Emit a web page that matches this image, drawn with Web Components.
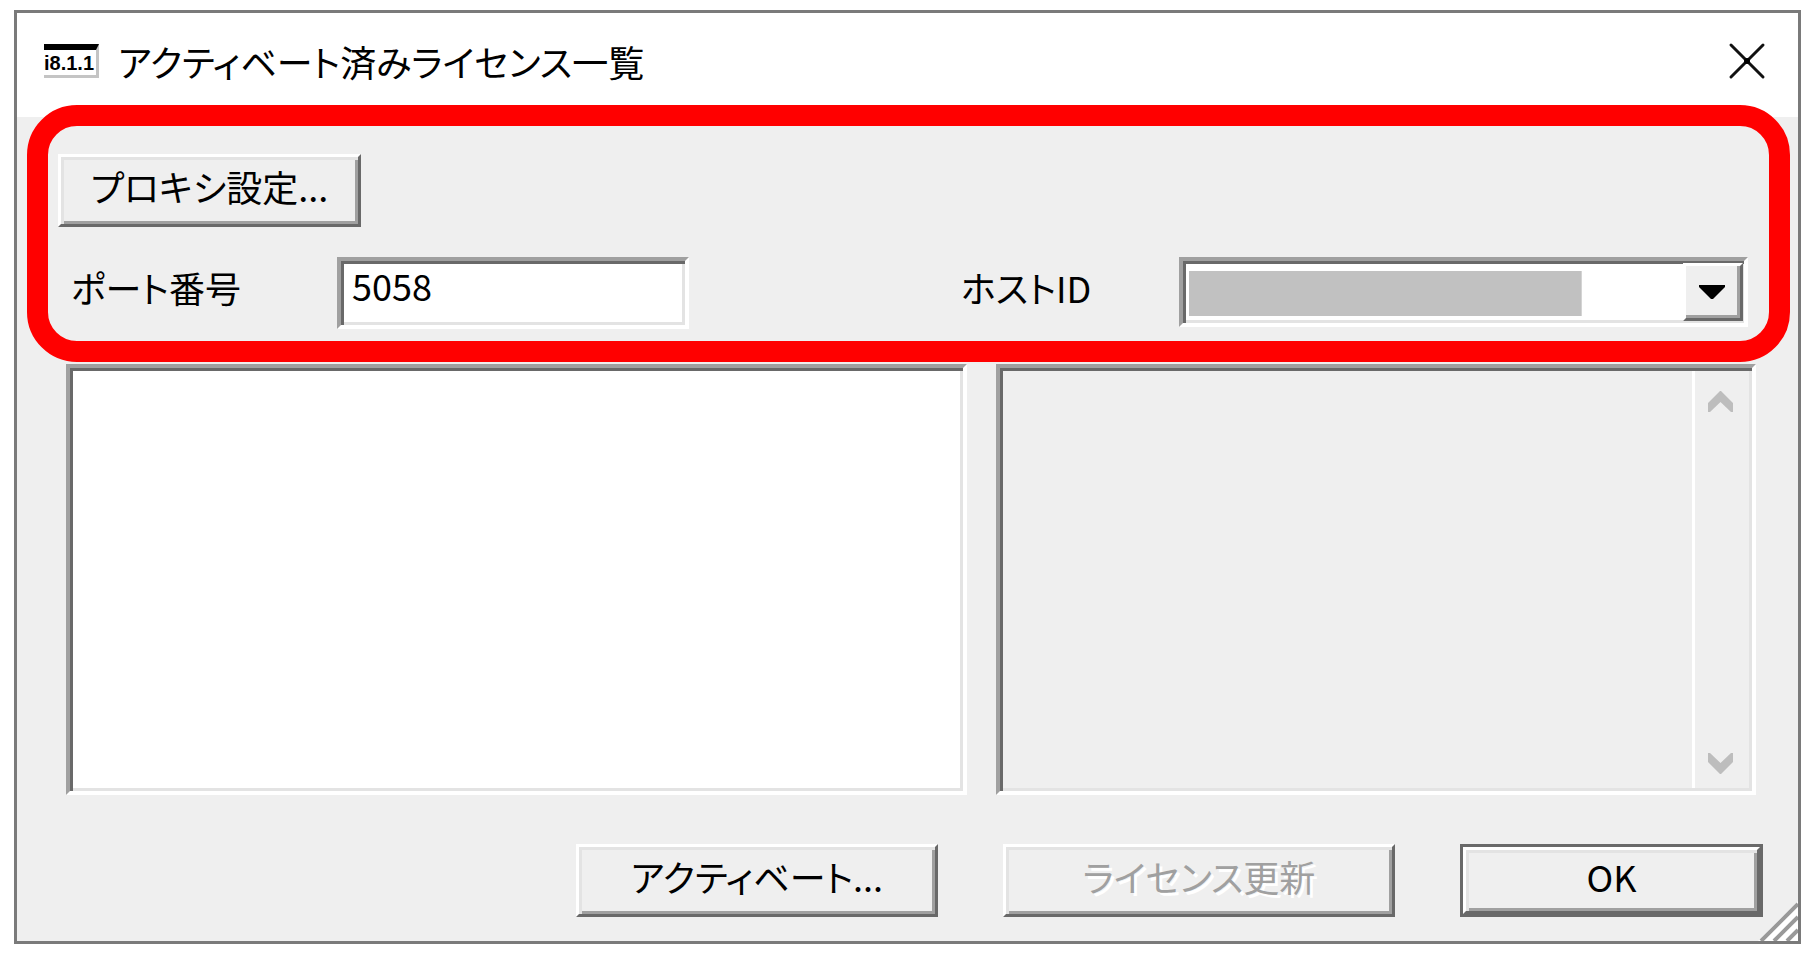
<!DOCTYPE html>
<html lang="ja">
<head>
<meta charset="utf-8">
<title>アクティベート済みライセンス一覧</title>
<style>
html, body { margin: 0; background: #fff; }
body {
  min-height: 100vh; display: flex; box-sizing: border-box; padding: 10px 14px 11px;
  font: 36px/40px "Noto Sans CJK JP", "Liberation Sans", sans-serif;
  font-feature-settings: "palt"; color: #000;
  --face: #efefef; --light: #fff; --soft: #e3e3e3; --mid: #a0a0a0; --dark: #696969;
}
</style>
</head>
<body>
<license-window></license-window>
<script>
class Base extends HTMLElement {
  constructor() {
    super();
    this.attachShadow({ mode: "open" }).innerHTML = this.constructor.markup;
  }
}

class TitleBar extends Base {
  static markup = `
<style>
:host { display: flex; align-items: center; height: 104px; background: #fff; padding: 0 32px 8px 27px; box-sizing: border-box; }
.icon { width: 55px; height: 34px; box-sizing: border-box; border: solid #c4c4c4; border-width: 0 3px 3px 0; border-top: 6px solid #000;
  font: bold 20px/26px "Liberation Sans", sans-serif; margin-right: 19px; white-space: nowrap; }
h1 { margin: 0; font: inherit; flex: 1; white-space: nowrap; }
button { border: 0; padding: 0; background: none; width: 38px; height: 38px; }
svg { display: block; }
</style>
<span class="icon">i8.1.1</span>
<h1><slot></slot></h1>
<button type="button" aria-label="閉じる"><svg width="38" height="38" viewBox="0 0 38 38"><path d="M3 3 35 35M35 3 3 35" stroke="#111" stroke-width="3" stroke-linecap="round"/><circle cx="19" cy="19" r="3"/></svg></button>`;
}
customElements.define("title-bar", TitleBar);

class PushButton extends Base {
  static markup = `
<style>
:host { display: block; height: 73px; }
:host([wide]) { width: 392px; }
:host([medium]) { width: 362px; }
:host([small]) { width: 303px; }
button { display: block; box-sizing: border-box; width: 100%; height: 100%; padding: 0 0 10px; margin: 0;
  font: inherit; font-feature-settings: inherit; color: #000; background: var(--face);
  border: 3px solid; border-color: var(--light) var(--dark) var(--dark) var(--light);
  box-shadow: inset 3px 3px var(--soft), inset -3px -3px var(--mid); white-space: nowrap; }
button:disabled { color: var(--mid); text-shadow: 3px 3px #fff; }
:host([default]) { box-sizing: border-box; border: 3px solid var(--dark); }
</style>
<button type="button"><slot></slot></button>`;
  connectedCallback() {
    this.shadowRoot.querySelector("button").disabled = this.hasAttribute("disabled");
  }
}
customElements.define("push-button", PushButton);

class ConnectionSettings extends Base {
  static markup = `
<style>
:host { display: block; position: relative; margin: 0 8px 0 10px; padding: 37px 42px 33px 31px; }
.mark { position: absolute; inset: -12px 0 0; border: 21px solid #f00; border-radius: 50px; pointer-events: none; }
.row { display: grid; grid-template-columns: 279fr 624fr 218fr 569fr; margin-top: 30px; height: 72px; }
label { align-self: center; white-space: nowrap; padding-bottom: 12px; }
.port { padding-left: 13px; }
input, select { display: block; box-sizing: border-box; margin: 0; font: inherit; border: 4px solid; border-radius: 0; outline: 0;
  border-color: var(--mid) var(--light) var(--light) var(--mid);
  box-shadow: inset 3px 3px var(--dark), inset -3px -3px var(--soft); }
input { width: 352px; height: 72px; padding: 0 11px 16px; background: #fff; }
.combo { display: grid; height: 70px; }
.combo > * { grid-area: 1 / 1; }
select { appearance: none; width: 100%; height: 70px;
  background: linear-gradient(#c1c1c1, #c1c1c1) 6px 10px / 70% 45px no-repeat #fff; }
.drop { justify-self: end; align-self: center; margin-right: 5px; width: 60px; height: 58px; box-sizing: border-box; pointer-events: none; padding-right: 3px;
  display: grid; place-items: center; background: var(--face);
  border: 3px solid; border-color: var(--light) var(--dark) var(--dark) var(--light);
  box-shadow: inset -3px -3px var(--mid); }
</style>
<push-button small>プロキシ設定...</push-button>
<div class="row">
  <label class="port" for="port">ポート番号</label>
  <input id="port" type="text" value="5058">
  <label for="host">ホストID</label>
  <div class="combo">
    <select id="host"></select>
    <span class="drop"><svg width="26" height="14" viewBox="0 0 26 14"><path d="M0 0h26v2L14 14h-2L0 2z"/></svg></span>
  </div>
</div>
<div class="mark"></div>`;
}
customElements.define("connection-settings", ConnectionSettings);

class LicensePanes extends Base {
  static markup = `
<style>
:host { display: grid; grid-template-columns: 901fr 760fr; gap: 29px; flex: 1; min-height: 200px; margin: 2px 42px 0 49px; }
select, .detail { box-sizing: border-box; margin: 0; border: 4px solid; border-radius: 0; padding: 3px; min-width: 0;
  border-color: var(--mid) var(--light) var(--light) var(--mid);
  box-shadow: inset 3px 3px var(--dark), inset -3px -3px var(--soft); }
select { appearance: none; width: 100%; height: 100%; background: #fff; }
.detail { display: flex; background: var(--face); }
textarea { flex: 1; min-width: 0; resize: none; border: 0; padding: 0; background: none; overflow: hidden; font: inherit; }
.bar { width: 57px; border-left: 3px solid #fff; display: flex; flex-direction: column; justify-content: space-between; align-items: center; padding: 20px 3px 14px 0; box-sizing: border-box; }
svg { display: block; }
</style>
<select size="2" aria-label="ライセンス一覧"></select>
<div class="detail">
  <textarea readonly aria-label="ライセンス詳細"></textarea>
  <div class="bar">
    <svg width="25" height="22" viewBox="0 0 25 22"><path d="M0 12 12 0h1l12 12v9h-2L12.500 11 2 21H0z" fill="#bdbdbd"/></svg>
    <svg width="25" height="22" viewBox="0 0 25 22"><path d="M0 10 12 22h1L25 10V1h-2L12.500 11 2 1H0z" fill="#bdbdbd"/></svg>
  </div>
</div>`;
}
customElements.define("license-panes", LicensePanes);

class LicenseWindow extends Base {
  static markup = `
<style>
:host { flex: 1; min-width: 0; display: flex; flex-direction: column; position: relative; box-sizing: border-box; border: 3px solid #7a7a7a; background: var(--face); }
footer { display: flex; justify-content: flex-end; gap: 65px; padding: 49px 35px 24px; }
.grip { position: absolute; right: 0; bottom: 0; display: block; }
</style>
<title-bar>アクティベート済みライセンス一覧</title-bar>
<connection-settings></connection-settings>
<license-panes></license-panes>
<footer>
  <push-button medium>アクティベート...</push-button>
  <push-button wide disabled>ライセンス更新</push-button>
  <push-button small default>OK</push-button>
</footer>
<svg class="grip" width="40" height="40" viewBox="0 0 40 40"><path d="M0 40 40 0v40z" fill="#fff"/><path d="M3 40 40 3M16 40 40 16M29 40 40 29" stroke="#999" stroke-width="4"/></svg>`;
}
customElements.define("license-window", LicenseWindow);
</script>
</body>
</html>
